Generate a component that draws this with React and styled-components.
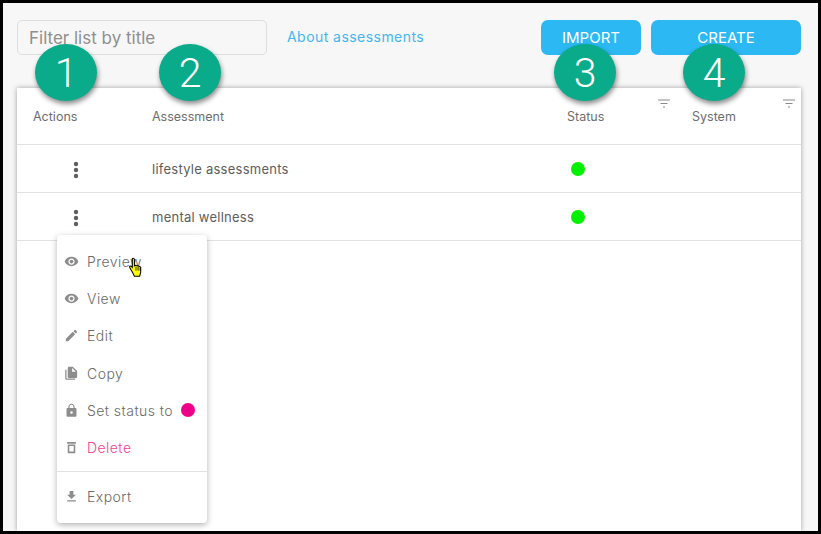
import React from 'react'
import styled, { createGlobalStyle } from 'styled-components'

const FONT = `Inter, "Open Sans", "Liberation Sans", sans-serif`

const GlobalStyle = createGlobalStyle`
  html, body { margin: 0; padding: 0; background: #000; }
  * { box-sizing: border-box; }
`

const Frame = styled.div`
  position: relative;
  width: 821px;
  height: 534px;
  border: 3px solid #000;
  background: #f7f7f7;
  overflow: hidden;
  font-family: ${FONT};
`

const Page = styled.div`
  display: flex;
  flex-direction: column;
  gap: 33px;
  padding: 17px 17px 0 14px;
  height: 100%;
`

const Toolbar = styled.div`
  display: flex;
  align-items: center;
  height: 35px;
`

const FilterInput = styled.input`
  flex: none;
  width: 250px;
  height: 35px;
  padding: 0 11px;
  border: 1px solid #dedede;
  border-radius: 5px;
  background: #f7f7f7;
  font: 400 17px ${FONT};
  outline: none;
  &::placeholder { color: #8f8f8f; opacity: 1; }
`

const HelpLink = styled.a`
  margin: -2px auto 0 20px;
  white-space: nowrap;
  font-size: 14px;
  letter-spacing: 0.45px;
  color: #45b6f2;
`

const Button = styled.button`
  flex: none;
  width: ${p => p.$width}px;
  height: 35px;
  margin-right: ${p => p.$gap}px;
  padding: 0 0 1px;
  border: 0;
  border-radius: 7px;
  background: #2cb8f2;
  color: #fff;
  font: 400 15px ${FONT};
`

const Card = styled.div`
  flex: 1;
  background: #fff;
  box-shadow: 0 0 5px rgba(0, 0, 0, 0.35);
`

const Row = styled.div`
  display: grid;
  grid-template-columns: 135px 415px 125px 1fr;
  align-items: center;
  height: ${p => p.$height}px;
  border-bottom: 1px solid #e2e2e2;
`

const HeadCell = styled.div`
  position: relative;
  height: 100%;
  padding: 21px 0 0 ${p => p.$indent || 0}px;
  font-size: 12.5px;
  line-height: 16px;
  color: #6e6e6e;
`

const FilterMark = styled.svg`
  position: absolute;
  top: 11px;
  right: ${p => p.$right}px;
  width: 14px;
  height: 10px;
`

const KebabCell = styled.div`
  display: flex;
  justify-content: center;
  padding-right: 17px;
`

const Kebab = styled.svg`
  width: 6px;
  height: 18px;
  margin-top: 3px;
  fill: #5f5f5f;
`

const TitleCell = styled.div`
  font-size: 13px;
  letter-spacing: 0.25px;
  color: #5d5d5d;
`

const StatusDot = styled.span`
  display: block;
  width: 14px;
  height: 14px;
  margin: 1px 0 0 4px;
  border-radius: 50%;
  background: #00f000;
`

const Callout = styled.div`
  position: absolute;
  top: 41px;
  left: ${p => p.$left}px;
  width: 62px;
  height: 57px;
  display: flex;
  align-items: center;
  justify-content: center;
  border-radius: 50%;
  background: #0aab8a;
  box-shadow: 1px 3px 5px rgba(0, 0, 0, 0.45);
  color: #fff;
  font: 300 41px Roboto, "Liberation Sans", sans-serif;
`

const Menu = styled.div`
  position: absolute;
  top: 232px;
  left: 54px;
  width: 150px;
  height: 288px;
  padding-top: 8px;
  border-radius: 4px;
  background: #fff;
  box-shadow: 0 2px 6px rgba(0, 0, 0, 0.3);
`

const MenuItem = styled.div`
  display: flex;
  align-items: center;
  height: 37.2px;
  padding-left: 7px;
  font-size: 14px;
  font-weight: 300;
  letter-spacing: 0.45px;
  color: ${p => (p.$danger ? '#f5408f' : '#6a6a6a')};
`

const MenuIcon = styled.svg`
  flex: none;
  width: 15px;
  height: 15px;
  margin-right: 8px;
  fill: #8d8d8d;
`

const PinkDot = styled.span`
  width: 14px;
  height: 14px;
  margin-left: 8px;
  border-radius: 50%;
  background: #ee0088;
`

const Divider = styled.div`
  height: 1px;
  margin: 5px 0 6px;
  background: #e2e2e2;
`

const Cursor = styled.svg`
  position: absolute;
  top: 254px;
  left: 125px;
  width: 17px;
  height: 22px;
`

const icons = {
  eye: 'M12 4.5C7 4.5 2.73 7.61 1 12c1.73 4.39 6 7.5 11 7.5s9.27-3.11 11-7.5c-1.73-4.39-6-7.5-11-7.5zM12 17c-2.76 0-5-2.24-5-5s2.24-5 5-5 5 2.24 5 5-2.24 5-5 5zm0-8c-1.66 0-3 1.34-3 3s1.34 3 3 3 3-1.34 3-3-1.34-3-3-3z',
  edit: 'M3 17.25V21h3.75L17.81 9.94l-3.75-3.75L3 17.25zM20.71 7.04a1 1 0 0 0 0-1.41l-2.34-2.34a1 1 0 0 0-1.41 0l-1.83 1.83 3.75 3.75 1.83-1.83z',
  copy: 'M4 6H2v14c0 1.1.9 2 2 2h14v-2H4V6zm10-5H8c-1.1 0-2 .9-2 2v14c0 1.1.9 2 2 2h11c1.1 0 2-.9 2-2V8l-7-7zm-1 8V3l6 6h-6z',
  lock: 'M18 8h-1V6c0-2.76-2.24-5-5-5S7 3.24 7 6v2H6c-1.1 0-2 .9-2 2v10c0 1.1.9 2 2 2h12c1.1 0 2-.9 2-2V10c0-1.1-.9-2-2-2zm-6 9c-1.1 0-2-.9-2-2s.9-2 2-2 2 .9 2 2-.9 2-2 2zm3.1-9H8.9V6c0-1.71 1.39-3.1 3.1-3.1s3.1 1.39 3.1 3.1v2z',
  trash: 'M5 3h14v3H5V3zm1 4h12v14H6V7zm2.5 2.5v9h7v-9h-7z',
  download: 'M19 9h-4V3H9v6H5l7 7 7-7zM5 18v2h14v-2H5z',
}

const Icon = ({name}) => (
  <MenuIcon viewBox='0 0 24 24'><path d={icons[name]} fillRule='evenodd'/></MenuIcon>
)

const FilterIcon = ({right}) => (
  <FilterMark $right={right} viewBox='0 0 14 10'>
    <path d='M1 1h12M3.5 4.5h7M6 8h2' stroke='#8a8a8a' strokeWidth='1.2' fill='none'/>
  </FilterMark>
)

const Dots = () => (
  <Kebab viewBox='0 0 6 18'>
    <circle cx='3' cy='3' r='2.2'/>
    <circle cx='3' cy='9' r='2.2'/>
    <circle cx='3' cy='15' r='2.2'/>
  </Kebab>
)

const rows = ['lifestyle assessments', 'mental wellness']
const callouts = [[32, '1'], [156, '2'], [551, '3'], [680, '4']]

const App = () => (
  <Frame>
    <GlobalStyle/>
    <Page>
      <Toolbar>
        <FilterInput placeholder='Filter list by title'/>
        <HelpLink>About assessments</HelpLink>
        <Button $width={100} $gap={10}>IMPORT</Button>
        <Button $width={150} $gap={0}>CREATE</Button>
      </Toolbar>
      <Card>
        <Row $height={57}>
          <HeadCell $indent={16}>Actions</HeadCell>
          <HeadCell>Assessment</HeadCell>
          <HeadCell>Status<FilterIcon right={21}/></HeadCell>
          <HeadCell>System<FilterIcon right={5}/></HeadCell>
        </Row>
        {rows.map(title => (
          <Row key={title} $height={48}>
            <KebabCell><Dots/></KebabCell>
            <TitleCell>{title}</TitleCell>
            <StatusDot/>
            <div/>
          </Row>
        ))}
      </Card>
    </Page>

    {callouts.map(([left, label]) => (
      <Callout key={label} $left={left}>{label}</Callout>
    ))}

    <Menu>
      <MenuItem><Icon name='eye'/>Preview</MenuItem>
      <MenuItem><Icon name='eye'/>View</MenuItem>
      <MenuItem><Icon name='edit'/>Edit</MenuItem>
      <MenuItem><Icon name='copy'/>Copy</MenuItem>
      <MenuItem><Icon name='lock'/>Set status to<PinkDot/></MenuItem>
      <MenuItem $danger><Icon name='trash'/>Delete</MenuItem>
      <Divider/>
      <MenuItem><Icon name='download'/>Export</MenuItem>
    </Menu>

    <Cursor viewBox='0 0 16 21'>
      <path d='M4 1.5c.9-.9 2 0 2 1v6l1-.6 1 .3 1 .1 1 .4 1 .3 1 .8v5l-1 3.5H6l-1.5-3L1.5 10c-.5-1 .6-1.8 1.4-1.2L4 10z' fill='#ffff00' stroke='#000' strokeWidth='1'/>
      <path d='M7.5 9v4M9.5 9v4M11.5 10v3' stroke='#000' strokeWidth='.8'/>
    </Cursor>
  </Frame>
)

export default App
